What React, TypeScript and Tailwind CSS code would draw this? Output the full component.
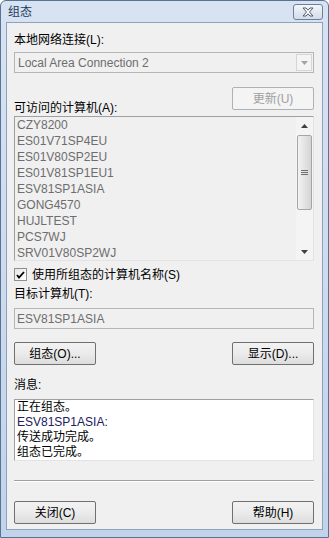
import React from "react";

const font = "font-['Liberation_Sans','Noto_Sans_CJK_SC',sans-serif]";

const computers = [
  "CZY8200",
  "ES01V71SP4EU",
  "ES01V80SP2EU",
  "ES01V81SP1EU1",
  "ESV81SP1ASIA",
  "GONG4570",
  "HUJLTEST",
  "PCS7WJ",
  "SRV01V80SP2WJ",
];

function Button({ label, disabled }: { label: string; disabled?: boolean }) {
  return (
    <div
      className={`w-[82px] h-[23px] flex items-center justify-center rounded-[2px] border text-[12px] ${
        disabled
          ? "border-[#adb2b5] bg-[#f4f4f4] text-[#a0a0a0]"
          : "border-[#707070] bg-gradient-to-b from-[#f2f2f2] via-[#ebebeb] to-[#dddddd] text-black"
      }`}
    >
      {label}
    </div>
  );
}

function Label({ children }: { children: React.ReactNode }) {
  return <div className="h-[14px] leading-[14px] text-[12px] text-black">{children}</div>;
}

export default function App() {
  return (
    <div
      className={`w-[329px] h-[538px] flex flex-col bg-gradient-to-b from-[#d7e3f2] to-[#c2d4ea] border border-[#5a7394] rounded-t-[6px] ${font}`}
    >
      {/* Title bar */}
      <div className="h-[21px] flex items-start justify-between pl-[7px] pr-[5px]">
        <div className="pt-[4px] text-[12px] leading-[14px] text-[#1e395b]">组态</div>
        <div className="mt-[3px] w-[30px] h-[16px] rounded-[3px] border border-[#6f7f96] bg-gradient-to-b from-[#f3f6fa] to-[#d2dceb] flex items-center justify-center">
          <svg width="12" height="10" viewBox="0 0 12 10">
            <path
              d="M1 1h3l2 2.2L8 1h3L7.5 5 11 9H8L6 6.8 4 9H1l3.5-4z"
              fill="#ffffff"
              stroke="#50596a"
              strokeWidth="1"
              strokeLinejoin="round"
            />
          </svg>
        </div>
      </div>

      {/* Client area */}
      <div className="mx-[5px] mb-[7px] flex-1 bg-[#f0f0f0] border border-[#8ea2bd] pl-[7px] pt-[10px] flex flex-col">
        <Label>本地网络连接(L):</Label>
        <div className="mt-[5px] w-[300px] h-[21px] border border-[#b5b5b5] bg-[#f0f0f0] flex items-center justify-between">
          <span className="pl-[3px] text-[12px] text-[#6d6d6d]">Local Area Connection 2</span>
          <div className="mr-[1px] w-[16px] h-[17px] border border-[#d5d5d5] bg-[#f4f4f4] flex items-center justify-center">
            <svg width="7" height="4" viewBox="0 0 7 4">
              <path d="M0 0h7L3.5 4z" fill="#a3a3a3" />
            </svg>
          </div>
        </div>

        <div className="w-[300px] flex items-start justify-between mt-[14px]">
          <div className="mt-[14px]">
            <Label>可访问的计算机(A):</Label>
          </div>
          <Button label="更新(U)" disabled />
        </div>

        {/* Computer list */}
        <div className="mt-[1px] w-[300px] h-[145px] border border-[#a0a0a0] border-r-[#e3e3e3] border-b-[#e3e3e3] bg-[#f0f0f0] flex overflow-hidden">
          <div className="flex-1 flex flex-col pl-[2px]">
            {computers.map((c) => (
              <div key={c} className="h-[16px] leading-[16px] text-[12px] text-[#6d6d6d]">
                {c}
              </div>
            ))}
          </div>
          <div className="w-[17px] bg-[#f4f4f4] flex flex-col items-center">
            <div className="h-[17px] flex items-center justify-center">
              <svg width="7" height="4" viewBox="0 0 7 4">
                <path d="M3.5 0L7 4H0z" fill="#404040" />
              </svg>
            </div>
            <div className="w-[15px] h-[75px] mt-[1px] rounded-[2px] border border-[#a6a6a6] bg-gradient-to-r from-[#f2f2f2] via-[#e4e4e4] to-[#d4d4d4] flex items-center justify-center">
              <svg width="7" height="6" viewBox="0 0 7 6">
                <path d="M0 0.5h7M0 2.5h7M0 4.5h7" stroke="#6e6e6e" strokeWidth="1" />
              </svg>
            </div>
            <div className="flex-1" />
            <div className="h-[17px] flex items-center justify-center">
              <svg width="7" height="4" viewBox="0 0 7 4">
                <path d="M0 0h7L3.5 4z" fill="#404040" />
              </svg>
            </div>
          </div>
        </div>

        {/* Checkbox */}
        <div className="mt-[7px] h-[13px] flex items-center gap-[5px]">
          <div className="w-[13px] h-[13px] border border-[#8e8f8f] bg-gradient-to-br from-[#e6e6e6] to-[#ffffff] flex items-center justify-center">
            <svg width="9" height="8" viewBox="0 0 9 8">
              <path d="M1 4l2 2.5L8 1" fill="none" stroke="#000" strokeWidth="1.8" />
            </svg>
          </div>
          <span className="text-[12px] leading-[14px] text-black">使用所组态的计算机名称(S)</span>
        </div>

        <div className="mt-[6px]">
          <Label>目标计算机(T):</Label>
        </div>
        <div className="mt-[7px] w-[300px] h-[21px] border border-[#b5b5b5] bg-[#f0f0f0] flex items-center">
          <span className="pl-[2px] text-[12px] text-[#6d6d6d]">ESV81SP1ASIA</span>
        </div>

        <div className="mt-[13px] w-[300px] flex justify-between">
          <Button label="组态(O)..." />
          <Button label="显示(D)..." />
        </div>

        <div className="mt-[13px]">
          <Label>消息:</Label>
        </div>
        <div className="mt-[7px] w-[300px] h-[62px] border border-[#a0a0a0] border-r-[#e3e3e3] border-b-[#e3e3e3] bg-white pl-[2px] text-[12px] leading-[15px] text-black">
          <div>正在组态。</div>
          <div className="text-[#20205a]">ESV81SP1ASIA:</div>
          <div>传送成功完成。</div>
          <div>组态已完成。</div>
        </div>

        <div className="mt-[19px] w-[300px] border-t border-[#a0a0a0] border-b border-b-white" />

        <div className="mt-[19px] w-[300px] flex justify-between">
          <Button label="关闭(C)" />
          <Button label="帮助(H)" />
        </div>
      </div>
    </div>
  );
}
